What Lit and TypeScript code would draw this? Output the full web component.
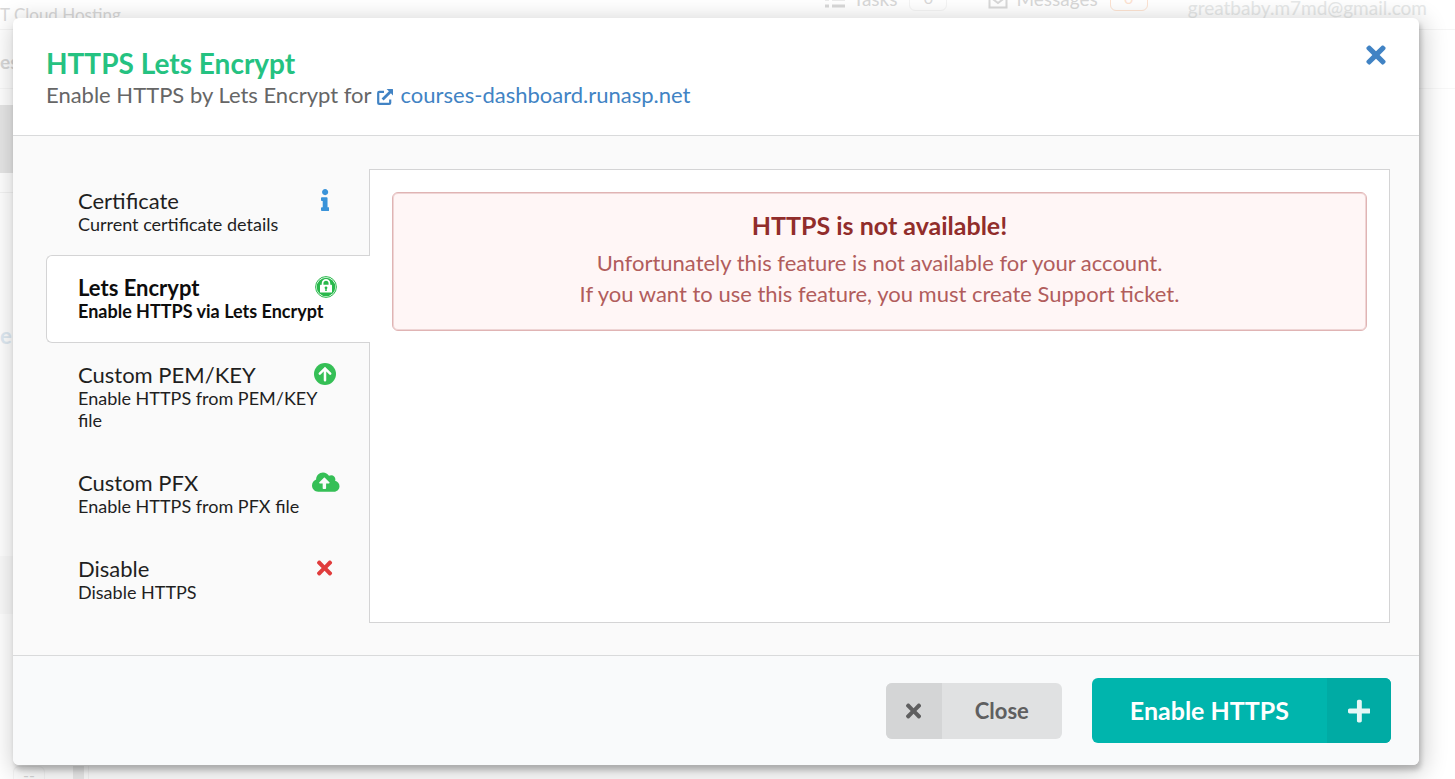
import { LitElement, html, css, svg } from "lit";
import { customElement, state } from "lit/decorators.js";

const TIMES = svg`<path d="M242.72 256l100.07-100.07c12.28-12.28 12.28-32.19 0-44.48l-22.24-22.24c-12.28-12.28-32.19-12.28-44.48 0L176 189.28 75.93 89.21c-12.28-12.28-32.19-12.28-44.48 0L9.21 111.45c-12.28 12.28-12.28 32.19 0 44.48L109.28 256 9.21 356.07c-12.28 12.28-12.28 32.19 0 44.48l22.24 22.24c12.28 12.28 32.2 12.28 44.48 0L176 322.72l100.07 100.07c12.28 12.28 32.2 12.28 44.48 0l22.24-22.24c12.28-12.28 12.28-32.19 0-44.48L242.72 256z"/>`;

const icons = {
  times: html`<svg viewBox="0 0 352 512" aria-hidden="true">${TIMES}</svg>`,
  plus: html`<svg viewBox="0 0 448 512" aria-hidden="true"><path d="M416 208H272V64c0-17.67-14.33-32-32-32h-32c-17.67 0-32 14.33-32 32v144H32c-17.67 0-32 14.33-32 32v32c0 17.67 14.33 32 32 32h144v144c0 17.67 14.33 32 32 32h32c17.67 0 32-14.33 32-32V304h144c17.67 0 32-14.33 32-32v-32c0-17.67-14.33-32-32-32z"/></svg>`,
  info: html`<svg viewBox="0 0 192 512" aria-hidden="true"><path d="M20 424.229h20V279.771H20c-11.046 0-20-8.954-20-20V212c0-11.046 8.954-20 20-20h112c11.046 0 20 8.954 20 20v212.229h20c11.046 0 20 8.954 20 20V492c0 11.046-8.954 20-20 20H20c-11.046 0-20-8.954-20-20v-47.771c0-11.046 8.954-20 20-20zM96 0C56.235 0 24 32.235 24 72s32.235 72 72 72 72-32.235 72-72S135.764 0 96 0z"/></svg>`,
  lock: html`<svg viewBox="0 0 22 22" aria-hidden="true"><circle cx="11" cy="11" r="10.4" fill="none" stroke="currentColor" stroke-width="1"/><circle cx="11" cy="11" r="9.3"/><path d="M7.600 10V7.300a3.400 3.400 0 0 1 6.800 0V10" fill="none" stroke="#fff" stroke-width="1.700"/><rect x="5" y="8.800" width="12" height="7.800" rx="0.600" fill="#fff"/><circle cx="11" cy="11.800" r="1.400"/><path d="M10.500 12h1l.4 3h-1.800z"/></svg>`,
  arrowUp: html`<svg viewBox="0 0 22 22" aria-hidden="true"><circle cx="11" cy="11" r="11"/><path d="M11 17.200V5.600M5.800 10.600 11 5.400l5.200 5.200" fill="none" stroke="#fff" stroke-width="2.500" stroke-linecap="round"/></svg>`,
  cloud: html`<svg viewBox="0 0 640 512" aria-hidden="true"><path d="M537.6 226.6c4.1-10.700 6.400-22.400 6.400-34.600 0-53-43-96-96-96-19.700 0-38.100 6-53.300 16.200C367 64.200 315.300 32 256 32c-88.400 0-160 71.600-160 160 0 2.700.1 5.400.2 8.100C40.200 219.800 0 273.200 0 336c0 79.500 64.500 144 144 144h368c70.700 0 128-57.300 128-128 0-61.900-44-113.600-102.400-125.400zM393.400 288H328v112c0 8.800-7.200 16-16 16h-48c-8.800 0-16-7.200-16-16V288h-65.400c-14.300 0-21.400-17.200-11.300-27.300l105.400-105.400c6.200-6.200 16.400-6.200 22.600 0l105.400 105.400c10.100 10.100 2.900 27.300-11.300 27.300z"/></svg>`,
  external: html`<svg viewBox="0 0 16 16" aria-hidden="true"><path d="M7 2.900H2.200a1 1 0 0 0-1 1v10a1 1 0 0 0 1 1h10a1 1 0 0 0 1-1V10.500" fill="none" stroke="currentColor" stroke-width="2.200"/><path d="M9.600 0H15.500a.5.5 0 0 1 .5.500V6.400L13.900 4.300 6.600 11.600 4.600 9.600 11.900 2.300z"/></svg>`,
};

interface Tab {
  title: string;
  text: string;
  icon: keyof typeof icons;
  tone: string;
}

const tabs: Tab[] = [
  { title: "Certificate", text: "Current certificate details", icon: "info", tone: "blue" },
  { title: "Lets Encrypt", text: "Enable HTTPS via Lets Encrypt", icon: "lock", tone: "green" },
  { title: "Custom PEM/KEY", text: "Enable HTTPS from PEM/KEY file", icon: "arrowUp", tone: "green" },
  { title: "Custom PFX", text: "Enable HTTPS from PFX file", icon: "cloud", tone: "green" },
  { title: "Disable", text: "Disable HTTPS", icon: "times", tone: "red" },
];

@customElement("page-backdrop")
export class PageBackdrop extends LitElement {
  static styles = css`
    :host { display: flex; flex-direction: column; overflow: hidden; color: #d8d8d8; font-size: 19px; background: #fff; }
    .topbar { display: flex; height: 60px; margin-top: -31px; flex: none; border-bottom: 1px solid #f5f5f5; align-items: center; }
    .brand { font-size: 17px; line-height: 24px; padding-top: 32px; flex: 1; white-space: nowrap; }
    .link { display: flex; align-items: center; gap: 8px; line-height: 24px; }
    .link svg { width: 20px; height: 20px; fill: none; stroke: currentColor; stroke-width: 3; }
    .badge { box-sizing: border-box; width: 38px; height: 24px; margin-left: 4px; border: 1px solid #f4f4f4; border-radius: 6px; text-align: center; font-size: 16px; line-height: 20px; }
    .badge.hot { border-color: #fde3d2; color: #fde3d2; }
    .messages { margin-left: 41px; }
    .user { padding: 16px 28px 0 40px; color: #e6e8e8; }
    .crumbs { height: 58px; flex: none; border-bottom: 1px solid #f7f7f7; font-weight: 700; line-height: 64px; }
    .side { height: 68px; margin-top: 16px; flex: none; width: 90px; background: #e6e6e6; }
    .group { height: 144px; width: 90px; margin-top: 19px; flex: none; border-top: 1px solid #f3f3f3; }
    .current { color: #dfeaf3; font-size: 22px; font-weight: 700; line-height: 26px; margin-top: -14px; flex: none; }
    .band { height: 58px; margin-top: 207px; flex: none; width: 90px; background: #fafafa; }
    .foot { display: flex; flex: 1; margin-top: 152px; align-items: stretch; }
    .chip { box-sizing: border-box; width: 32px; height: 30px; margin-left: 13px; border: 1px solid #f6f6f6; border-radius: 6px; font-size: 16px; line-height: 16px; text-align: center; }
    .gutter { width: 11px; margin-left: 28px; background: #ececec; margin-right: 4px; }
    .sheet { flex: 1; border-left: 1px solid #f5f5f5; }
  `;

  render() {
    return html`
      <div class="topbar">
        <span class="brand">T Cloud Hosting</span>
        <span class="link"><svg viewBox="0 0 20 20"><path d="M7 3h13M7 10h13M7 17h13M0 3h4M0 10h4M0 17h4"/></svg>Tasks<span class="badge">0</span></span>
        <span class="link messages"><svg viewBox="0 0 20 20"><path d="M1.500 1.500h17v17h-17zM2 8l8 6 8-6" stroke-width="2"/></svg>Messages<span class="badge hot">0</span></span>
        <span class="user">greatbaby.m7md@gmail.com</span>
      </div>
      <div class="crumbs">es</div>
      <div class="side"></div>
      <div class="group"></div>
      <div class="current">e</div>
      <div class="band"></div>
      <div class="foot"><div class="chip">--</div><div class="gutter"></div><div class="sheet"></div></div>
    `;
  }
}

@customElement("app-root")
export class AppRoot extends LitElement {
  static styles = css`
    :host { display: grid; grid-template: minmax(0, 1fr) / minmax(0, 1fr); height: 100vh; min-height: 700px; font-family: Lato, "Liberation Sans", sans-serif; font-size: 22px; overflow: hidden; color: #1f1f1f; }
    button { font: inherit; color: inherit; border: 0; padding: 0; margin: 0; background: none; cursor: pointer; }
    svg { display: block; fill: currentColor; }
    page-backdrop, .modal { grid-area: 1 / 1; }
    .modal { display: flex; flex-direction: column; margin: 18px 36px 14px 13px; z-index: 1; background: #fff; border-radius: 6px; overflow: clip; box-shadow: 2px 5px 5px 0 rgba(0, 0, 0, 0.2), 2px 5px 24px 3px rgba(0, 0, 0, 0.2); }
    .header { display: flex; justify-content: space-between; align-items: flex-start; padding: 27px 33px 26px; border-bottom: 1px solid #d9dadb; }
    h1 { margin: 0; font-size: 28px; line-height: 36px; color: #25c281; }
    .subtitle { margin: 0; line-height: 28px; color: #666; }
    .subtitle a { color: #4183c4; text-decoration: none; }
    .subtitle svg { display: inline-block; width: 16px; height: 16px; margin: 0 8px 0 5px; vertical-align: -2px; }
    .dismiss { color: #4183c4; }
    .dismiss svg { display: block; width: 20px; height: 28px; margin-top: -4px; }
    .content { display: flex; flex: 1; padding: 33px 29px 32px 33px; background: #fafafa; }
    .tabs { display: flex; flex-direction: column; width: 323px; flex: none; }
    .tab { display: grid; grid-template-columns: 1fr 26px; padding: 20px 31px 20px 32px; text-align: left; font-size: 18px; line-height: 22px; }
    .tab .name { font-size: 22px; line-height: 24px; }
    .tab .text { grid-column: 1 / -1; }
    .tab .icon { display: grid; align-items: start; justify-content: center; }
    .tab svg { height: 22px; }
    .tab .lock svg { margin-left: 2px; }
    .tab.active { position: relative; margin-right: -1px; padding-left: 31px; padding-right: 32px; border: 1px solid #d4d4d5; border-right: 0; border-radius: 6px 0 0 6px; background: #fff; font-weight: 700; color: #0d0d0d; }
    .blue { color: #3a93d9; }
    .green { color: #35bf56; }
    .lock { color: #28b94b; }
    .red { color: #e03c3c; }
    .panel { flex: 1; padding: 22px; border: 1px solid #d4d4d5; background: #fff; }
    .alert { padding: 15px 24px 21px; border: 1px solid #e0b4b4; border-radius: 6px; box-shadow: inset 0 0 0 1px rgba(224, 180, 180, 0.5); background: #fff6f6; text-align: center; }
    .alert h2 { margin: 0 0 5px; font-size: 25px; line-height: 34px; color: #912d2b; }
    .alert p { margin: 0; line-height: 31px; color: #b15d5c; }
    .footer { display: flex; justify-content: flex-end; align-items: center; gap: 30px; padding: 22px 28px; border-top: 1px solid #d9dadb; background: #f9fafb; }
    .action { display: flex; align-items: stretch; height: 56px; border-radius: 6px; overflow: hidden; font-weight: 700; line-height: 56px; background: #e0e1e2; color: #5f5f60; }
    .action .label { padding: 0 33px; }
    .action .glyph { display: grid; place-items: center; width: 56px; background: #d4d5d6; }
    .action .glyph svg { height: 22px; }
    .primary { height: 65px; font-size: 25px; line-height: 65px; background: #00b5ad; color: #fff; }
    .primary .label { padding: 0 38px; }
    .primary .glyph { width: 64px; background: #00aba4; color: #e6f7f6; }
    .primary .glyph svg { height: 26px; }
  `;

  @state() private active = 1;

  render() {
    return html`
      <page-backdrop aria-hidden="true"></page-backdrop>
      <section class="modal" role="dialog" aria-labelledby="title">
        <header class="header">
          <div>
            <h1 id="title">HTTPS Lets Encrypt</h1>
            <p class="subtitle">Enable HTTPS by Lets Encrypt for<a href="#site">${icons.external}courses-dashboard.runasp.net</a></p>
          </div>
          <button class="dismiss" aria-label="Close dialog">${icons.times}</button>
        </header>
        <div class="content">
          <nav class="tabs">
            ${tabs.map(
              (tab, i) => html`<button class="tab ${i === this.active ? "active" : ""}" @click=${() => (this.active = i)}>
                <span class="name">${tab.title}</span>
                <span class="icon ${tab.tone} ${tab.icon}">${icons[tab.icon]}</span>
                <span class="text">${tab.text}</span>
              </button>`
            )}
          </nav>
          <div class="panel">
            <div class="alert">
              <h2>HTTPS is not available!</h2>
              <p>Unfortunately this feature is not available for your account.</p>
              <p>If you want to use this feature, you must create Support ticket.</p>
            </div>
          </div>
        </div>
        <footer class="footer">
          <button class="action"><span class="glyph">${icons.times}</span><span class="label">Close</span></button>
          <button class="action primary"><span class="label">Enable HTTPS</span><span class="glyph">${icons.plus}</span></button>
        </footer>
      </section>
    `;
  }
}
